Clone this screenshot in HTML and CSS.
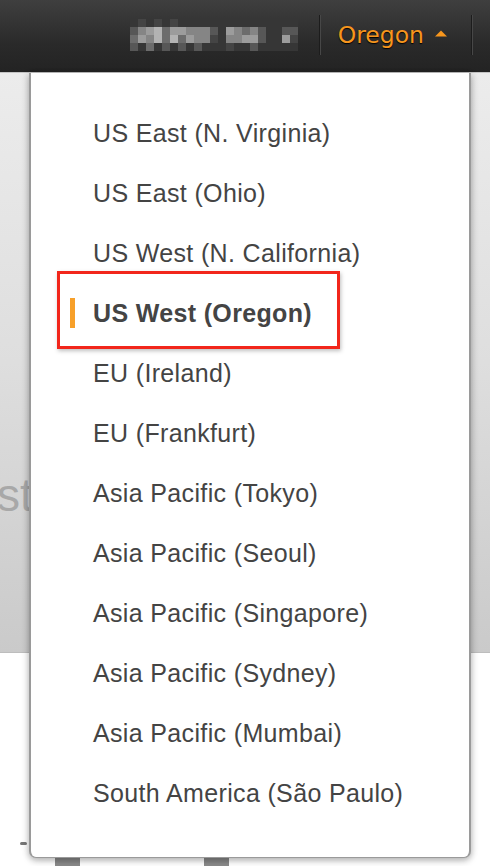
FILE: index.html
```html
<!DOCTYPE html>
<html>
<head>
<meta charset="utf-8">
<link rel="stylesheet" href="styles.css">
</head>
<body>
<header class="topbar">
  <div class="user">
    <div class="mosaic">
      <i class="g0"></i><i class="g1"></i><i class="g0"></i><i class="g1"></i><i class="g0"></i><i class="g1"></i><i class="g0"></i><i class="g0"></i><i class="g0"></i><i class="g0"></i><i class="g0"></i><i class="g0"></i><i class="g0"></i><i class="g0"></i><i class="g0"></i><i class="g0"></i><i class="g0"></i><i class="g0"></i><i class="g0"></i><i class="g0"></i><i class="g0"></i>
      <i class="g2"></i><i class="g4"></i><i class="g5"></i><i class="g6"></i><i class="g3"></i><i class="g5"></i><i class="g5"></i><i class="g4"></i><i class="g4"></i><i class="g4"></i><i class="g2"></i><i class="g0"></i><i class="g5"></i><i class="g4"></i><i class="g3"></i><i class="g4"></i><i class="g2"></i><i class="g0"></i><i class="g0"></i><i class="g2"></i><i class="g2"></i>
      <i class="g3"></i><i class="g5"></i><i class="g4"></i><i class="g6"></i><i class="g3"></i><i class="g6"></i><i class="g3"></i><i class="g5"></i><i class="g4"></i><i class="g4"></i><i class="g1"></i><i class="g0"></i><i class="g4"></i><i class="g4"></i><i class="g5"></i><i class="g5"></i><i class="g2"></i><i class="g0"></i><i class="g0"></i><i class="g5"></i><i class="g1"></i>
      <i class="g2"></i><i class="g0"></i><i class="g3"></i><i class="g0"></i><i class="g2"></i><i class="g0"></i><i class="g2"></i><i class="g0"></i><i class="g2"></i><i class="g0"></i><i class="g0"></i><i class="g0"></i><i class="g1"></i><i class="g0"></i><i class="g0"></i><i class="g2"></i><i class="g0"></i><i class="g0"></i><i class="g0"></i><i class="g0"></i><i class="g0"></i>
    </div>
  </div>
  <div class="sep"></div>
  <div class="region">
    <span class="region-name">Oregon</span>
    <svg class="caret" width="12" height="7" viewBox="0 0 12 7"><path d="M0 6.5 L6 0.5 L12 6.5 Z" fill="#f7961d"/></svg>
  </div>
  <div class="sep"></div>
</header>

<main class="page">
  <div class="backdrop">
    <div class="panel">
      <span class="ghost">st</span>
    </div>
    <div class="lower">
      <span class="dot"></span>
      <div class="tabs"><span class="tab"></span><span class="tab"></span></div>
    </div>
  </div>

  <div class="menu">
    <ul class="list">
      <li class="item">US East (N. Virginia)</li>
      <li class="item">US East (Ohio)</li>
      <li class="item">US West (N. California)</li>
      <li class="item active">US West (Oregon)</li>
      <li class="item">EU (Ireland)</li>
      <li class="item">EU (Frankfurt)</li>
      <li class="item">Asia Pacific (Tokyo)</li>
      <li class="item">Asia Pacific (Seoul)</li>
      <li class="item">Asia Pacific (Singapore)</li>
      <li class="item">Asia Pacific (Sydney)</li>
      <li class="item">Asia Pacific (Mumbai)</li>
      <li class="item">South America (São Paulo)</li>
    </ul>
    <div class="highlight"></div>
  </div>
</main>
</body>
</html>
```

FILE: styles.css
```css
* { box-sizing: border-box; }
html, body { margin: 0; padding: 0; }
body {
  width: 490px;
  height: 866px;
  overflow: hidden;
  font-family: "Liberation Sans", Arial, sans-serif;
  background: #fff;
}

.topbar {
  height: 73px;
  display: flex;
  align-items: center;
  justify-content: flex-end;
  background: linear-gradient(#3f3f3f, #2a2a2a 60%, #232323);
  border-bottom: 1px solid #c4c4c4;
  padding-right: 17px;
}

.user {
  display: flex;
  align-items: center;
  padding-right: 21px;
  margin-top: -2px;
}
.mosaic {
  display: grid;
  grid-template-columns: repeat(21, 8px);
  grid-auto-rows: 8px;
}
.mosaic i { display: block; }
.g0 { background: #363636; }
.g1 { background: #444; }
.g2 { background: #575757; }
.g3 { background: #6c6c6c; }
.g4 { background: #858585; }
.g5 { background: #9c9c9c; }
.g6 { background: #b3b3b3; }

.sep {
  width: 2px;
  height: 40px;
  margin-top: -2px;
  background: #1c1c1c;
  border-right: 1px solid #474747;
}

.region {
  display: flex;
  align-items: center;
  gap: 11px;
  padding: 0 24px 0 17px;
  margin-top: -2px;
}
.region-name {
  font-family: "DejaVu Sans", Verdana, sans-serif;
  font-size: 23.5px;
  color: #f7961d;
  text-shadow: 0 1px 1px #000;
  letter-spacing: 0;
}
.caret { margin-top: -3px; }

.page {
  position: relative;
  height: 793px;
}

.backdrop {
  display: flex;
  flex-direction: column;
  height: 100%;
}
.panel {
  height: 580px;
  background: linear-gradient(#ececec, #dedede 50%, #cacaca);
  border-bottom: 1px solid #bdbdbd;
  padding-top: 394px;
  overflow: hidden;
}
.ghost {
  display: block;
  font-size: 46px;
  line-height: 56px;
  color: #a8a8a8;
  margin-left: -3px;
}
.lower {
  flex: 1;
  background: #fff;
  position: relative;
  display: flex;
  flex-direction: column;
  justify-content: flex-end;
}
.dot {
  position: absolute;
  left: 20px;
  top: 189px;
  width: 7px;
  height: 3px;
  border-radius: 2px;
  background: #777;
}
.tabs {
  display: flex;
  gap: 124px;
  padding-left: 55px;
}
.tab {
  width: 25px;
  height: 8px;
  background: #8a8a8a;
}

.menu {
  position: absolute;
  left: 29px;
  top: 0;
  width: 442px;
  height: 785px;
  background: #fff;
  border: 1px solid #9a9a9a;
  border-left-width: 2px;
  border-right-width: 2px;
  border-top: none;
  border-radius: 0 0 7px 7px;
  box-shadow: 0 3px 6px rgba(0,0,0,0.25), -3px 0 6px rgba(0,0,0,0.06), 3px 0 6px rgba(0,0,0,0.06);
}
.list {
  list-style: none;
  margin: 0;
  padding: 30px 0 0 62px;
}
.item {
  height: 60px;
  line-height: 60px;
  font-size: 25px;
  letter-spacing: 0.35px;
  color: #444;
  position: relative;
  white-space: nowrap;
}
.item.active {
  font-weight: bold;
}
.item.active::before {
  content: "";
  position: absolute;
  left: -23px;
  top: 15px;
  width: 5px;
  height: 30px;
  background: #f7a02a;
}

.highlight {
  position: absolute;
  left: 26px;
  top: 198px;
  width: 283px;
  height: 78px;
  border: 3px solid #f2261b;
  box-shadow: 1px 2px 4px rgba(0,0,0,0.25);
}
```
